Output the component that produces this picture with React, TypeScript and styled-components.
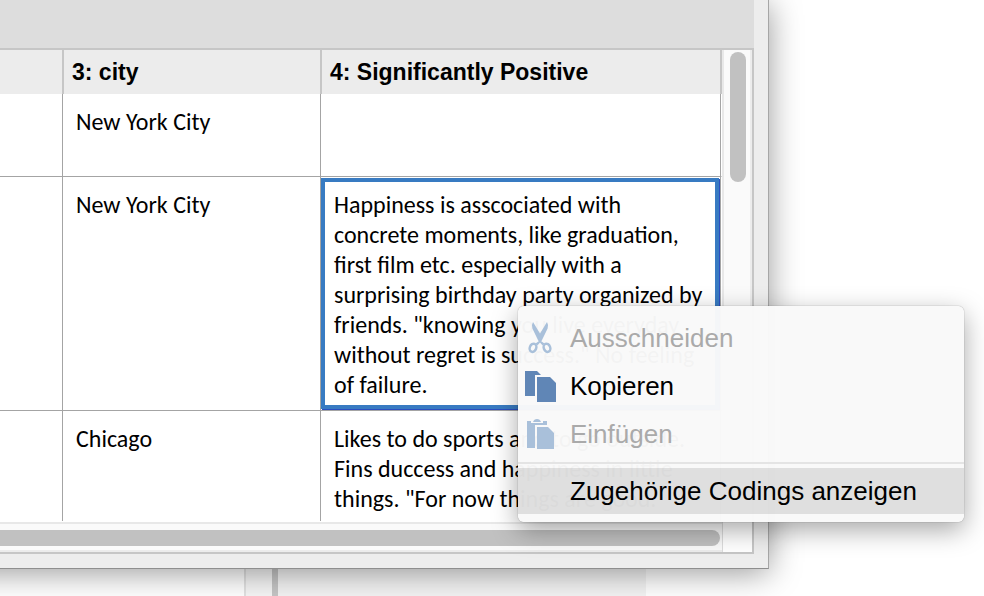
import React, { ReactNode } from "react";
import styled, { createGlobalStyle } from "styled-components";

const GlobalStyle = createGlobalStyle`
  *, *::before, *::after { box-sizing: border-box; }
  body { margin: 0; background: #fff; color: #000; }
`;

const Desktop = styled.div`
  position: relative;
  display: flex;
  flex-direction: column;
  height: 100vh;
  overflow: hidden;
  font-family: "Liberation Sans", Arial, sans-serif;
`;

const Window = styled.main`
  position: relative;
  z-index: 1;
  flex: none;
  display: flex;
  flex-direction: column;
  margin: 0 215px 0 -40px;
  padding: 0 14px 14px 40px;
  background: #ededed;
  border-right: 1px solid #a6a6a6;
  border-bottom: 1px solid #8e8e8e;
  box-shadow: 0 4px 30px rgba(0, 0, 0, 0.4);
`;

const Toolbar = styled.header`
  height: 48px;
  background: #ddd;
`;

const Frame = styled.section`
  display: grid;
  grid-template-columns: 1fr 30px;
  grid-template-rows: 472px 30px;
  border: 2px solid #c6c6c6;
  border-left: 0;
  background: #fff;
`;

const Sheet = styled.div`
  overflow: hidden;
  border-bottom: 1px solid #fff;
`;

const Table = styled.table`
  width: 100%;
  table-layout: fixed;
  border-collapse: separate;
  border-spacing: 0;
`;

const HeadCell = styled.th<{ $width?: number }>`
  width: ${(p) => (p.$width ? `${p.$width}px` : "auto")};
  height: 44px;
  padding: 0 8px;
  background: #ececec;
  border-left: 2px solid #c6c6c6;
  text-align: left;
  font-size: 23px;
  line-height: 28px;
  white-space: nowrap;

  &:first-child { border-left: 0; }
  &:last-child { border-right: 2px solid #c6c6c6; }
`;

const Row = styled.tr<{ $height: number }>`
  height: ${(p) => p.$height}px;
`;

const Cell = styled.td<{ $selected?: boolean }>`
  padding: ${(p) => (p.$selected ? "1px 0 0" : "13px 0 0 13px")};
  vertical-align: top;
  border-left: 1px solid #a4a4a4;
  border-bottom: 1px solid #a4a4a4;
  font-family: Carlito, Lato, sans-serif;
  font-size: 24px;
  line-height: 30px;
  white-space: nowrap;

  &:first-child { border-left: 0; }
  &:last-child {
    border-right: 1px solid #fff;
    box-shadow: inset -1px 0 #a4a4a4;
  }
`;

const Selection = styled.div`
  margin-right: 2px;
  padding: 8px 0 5px 9px;
  border: 4px solid #387bc2;
  box-shadow: 1px 1px #2a4fc0;
`;

const Line = styled.span`
  display: block;
`;

const VerticalTrack = styled.div`
  padding: 2px 4px 0 6px;
  background: #fafafa;
  border-left: 2px solid #e8e8e8;
  border-right: 2px solid #ececec;
`;

const HorizontalTrack = styled.div`
  padding: 6px 2px 4px 0;
  background: #fafafa;
  border-top: 2px solid #e8e8e8;
  border-bottom: 2px solid #ececec;
`;

const VerticalThumb = styled.div`
  width: 16px;
  height: 130px;
  border-radius: 8px;
  background: #c1c1c1;
`;

const HorizontalThumb = styled.div`
  height: 16px;
  border-radius: 0 8px 8px 0;
  background: #c1c1c1;
`;

const Corner = styled.div`
  border-left: 1px solid #dcdcdc;
`;

const BackPanels = styled.div`
  flex: 1;
  display: grid;
  grid-template-columns: 244px 28px 374px 1fr;
`;

const Divider = styled.div`
  background: #f6f6f6;
  border-left: 2px solid #e2e2e2;
`;

const BackPanel = styled.div`
  background: #f4f4f4;
  border-left: 6px solid #c6c6c6;
`;

const Menu = styled.div`
  position: absolute;
  z-index: 2;
  top: 306px;
  left: 518px;
  width: 446px;
  padding: 8px 0;
  border-radius: 6px;
  background: rgba(249, 249, 249, 0.975);
  box-shadow: 0 0 1px rgba(0, 0, 0, 0.6), 0 8px 26px rgba(0, 0, 0, 0.35);
`;

const MenuItem = styled.button<{ $active?: boolean }>`
  display: flex;
  align-items: center;
  width: 100%;
  height: ${(p) => (p.$active ? 46 : 48)}px;
  padding: 0;
  border: 0;
  background: ${(p) => (p.$active ? "rgba(0, 0, 0, 0.1)" : "transparent")};
  color: #000;
  font-family: inherit;
  font-size: 26px;
  line-height: 30px;
  text-align: left;
  white-space: nowrap;

  &:disabled { color: #aaa; }
`;

const IconSlot = styled.span`
  flex: none;
  display: flex;
  width: 52px;
  padding-left: 6px;
`;

const Separator = styled.hr`
  height: 2px;
  margin: 4px 0;
  border: 0;
  background: #e4e4e4;
`;

const ScissorsIcon = () => (
  <svg width="32" height="32" viewBox="0 0 32 32" fill="none" aria-hidden="true">
    <path d="M9 0L17.8 14.4L16.2 18.4L20.5 21.4L18.4 23.2L14.2 18.6L8.4 6.4Q7.2 3 9 0Z" fill="#a9c0da" />
    <path d="M23 0L14.2 14.4L15.8 18.4L11.5 21.4L13.6 23.2L17.8 18.6L23.6 6.4Q24.8 3 23 0Z" fill="#a9c0da" />
    <ellipse cx="9" cy="25.8" rx="3.2" ry="4.2" transform="rotate(22 9 25.8)" stroke="#a9c0da" strokeWidth="2.5" />
    <ellipse cx="23" cy="25.8" rx="3.2" ry="4.2" transform="rotate(-22 23 25.8)" stroke="#a9c0da" strokeWidth="2.5" />
  </svg>
);

const CopyIcon = () => (
  <svg width="32" height="32" viewBox="0 0 32 32" aria-hidden="true">
    <path d="M1 1H13L17 5H11V26H1Z" fill="#6086b6" />
    <path d="M13 7H26L32 13V32H13Z" fill="#6086b6" />
  </svg>
);

const PasteIcon = () => (
  <svg width="32" height="32" viewBox="0 0 32 32" aria-hidden="true">
    <path d="M3 3H23V7H11V30H3Z" fill="#a9c0da" />
    <path d="M7 3V5H19V3Q17 3 16 1H10Q9 3 7 3Z" fill="#f9f9f9" />
    <path d="M9 4Q10 1 13 1Q16 1 17 4Z M7 5H19V7H7Z" fill="#a9c0da" />
    <path d="M13 9H24L30 15V31H13Z" fill="#a9c0da" />
  </svg>
);

type MenuEntry = { label: string; icon?: ReactNode; disabled?: boolean };

const editEntries: MenuEntry[] = [
  { label: "Ausschneiden", icon: <ScissorsIcon />, disabled: true },
  { label: "Kopieren", icon: <CopyIcon /> },
  { label: "Einfügen", icon: <PasteIcon />, disabled: true },
];

const rows = [
  { city: "New York City", height: 83, lines: [] as string[] },
  {
    city: "New York City",
    height: 234,
    selected: true,
    lines: [
      "Happiness is asscociated with",
      "concrete moments, like graduation,",
      "first film etc. especially with a",
      "surprising birthday party organized by",
      'friends. "knowing you live everyday',
      'without regret is success." No feeling',
      "of failure.",
    ],
  },
  {
    city: "Chicago",
    height: 134,
    lines: [
      "Likes to do sports and to go outside.",
      "Fins duccess and happiness in little",
      'things. "For now things are good.',
    ],
  },
];

export default function App() {
  return (
    <Desktop>
      <GlobalStyle />
      <Window>
        <Toolbar />
        <Frame>
          <Sheet>
            <Table>
              <thead>
                <tr>
                  <HeadCell $width={62} />
                  <HeadCell $width={258}>3: city</HeadCell>
                  <HeadCell>4: Significantly Positive</HeadCell>
                </tr>
              </thead>
              <tbody>
                {rows.map((row, i) => {
                  const text = row.lines.map((line) => <Line key={line}>{line}</Line>);
                  return (
                    <Row key={i} $height={row.height}>
                      <Cell />
                      <Cell>{row.city}</Cell>
                      <Cell $selected={row.selected}>
                        {row.selected ? <Selection>{text}</Selection> : text}
                      </Cell>
                    </Row>
                  );
                })}
              </tbody>
            </Table>
          </Sheet>
          <VerticalTrack>
            <VerticalThumb />
          </VerticalTrack>
          <HorizontalTrack>
            <HorizontalThumb />
          </HorizontalTrack>
          <Corner />
        </Frame>
      </Window>
      <BackPanels>
        <div />
        <Divider />
        <BackPanel />
      </BackPanels>
      <Menu role="menu">
        {editEntries.map((entry) => (
          <MenuItem key={entry.label} type="button" role="menuitem" disabled={entry.disabled}>
            <IconSlot>{entry.icon}</IconSlot>
            {entry.label}
          </MenuItem>
        ))}
        <Separator />
        <MenuItem type="button" role="menuitem" $active>
          <IconSlot />
          Zugehörige Codings anzeigen
        </MenuItem>
      </Menu>
    </Desktop>
  );
}
